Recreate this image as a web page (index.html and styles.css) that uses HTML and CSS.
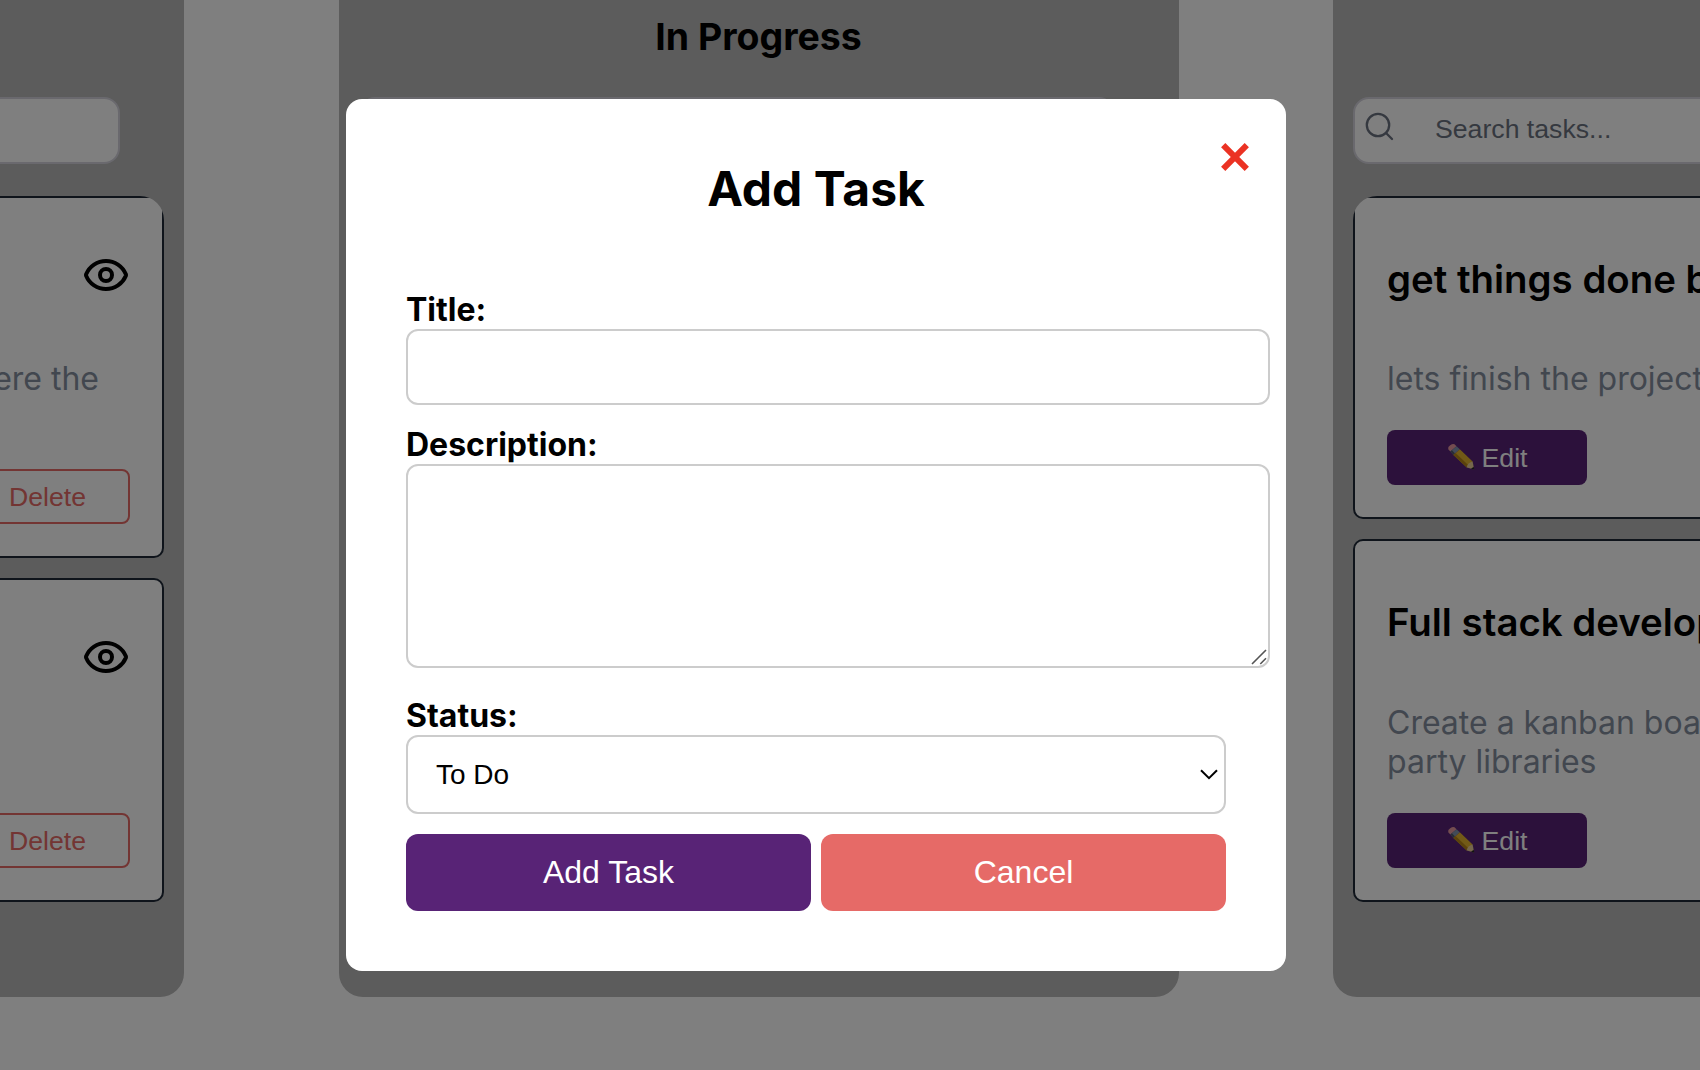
FILE: index.html
```
<!DOCTYPE html>
<html lang="en">
<head>
<meta charset="utf-8">
<title>Kanban Board</title>
<link rel="stylesheet" href="styles.css">
</head>
<body>
<svg class="defs" aria-hidden="true">
  <symbol id="eye" viewBox="0 0 24 24">
    <g fill="none" stroke="#000" stroke-width="2" stroke-linecap="round" stroke-linejoin="round">
      <path d="M2.062 12.348a1 1 0 0 1 0-.696 10.75 10.75 0 0 1 19.876 0 1 1 0 0 1 0 .696 10.75 10.75 0 0 1-19.876 0"/>
      <circle cx="12" cy="12" r="3"/>
    </g>
  </symbol>
  <symbol id="pencil" viewBox="0 0 28 28">
    <path d="M1.200 6.200 Q0.600 3.800 3.200 2.200 Q5.800 .3 7.500 1.200 L9.500 3.200 L3.400 8.600Z" fill="#e89aa0"/>
    <path d="M3.400 8.600 L9.500 3.200 L12.800 6.300 L6.400 12Z" fill="#8497b0"/>
    <path d="M3.400 8.600 L5 7.200 L8 10.600 L6.400 12Z" fill="#50586a"/>
    <path d="M6.400 12 L12.800 6.300 L25.600 18.400 L19.800 24.600Z" fill="#e5b52e"/>
    <path d="M6.400 12 L8.600 10 L21.700 22.600 L19.800 24.600Z" fill="#b78518"/>
    <path d="M19.800 24.600 Q20 20 25.600 18.400 L27.200 26.600Z" fill="#edcf98"/>
    <path d="M24 25.700 L26.700 23.700 L27.300 26.800Z" fill="#262626"/>
  </symbol>
  <symbol id="trash" viewBox="0 0 28 28">
    <path d="M2 2 H26 V5 H2Z M4 6 H24 L22 27 H6Z" fill="#a9adb3"/>
  </symbol>
</svg>

<main class="board">
  <section class="column">
    <h2 class="column-title"></h2>
    <div class="search"></div>
    <div class="tasks">
      <article class="card">
        <header class="card-head"><svg class="eye"><use href="#eye"/></svg></header>
        <p class="card-text two-lines align-end">here the</p>
        <div class="actions end"><button class="btn delete"><svg class="trash"><use href="#trash"/></svg>Delete</button></div>
      </article>
      <article class="card">
        <header class="card-head"><svg class="eye"><use href="#eye"/></svg></header>
        <p class="card-text"></p>
        <div class="actions end"><button class="btn delete"><svg class="trash"><use href="#trash"/></svg>Delete</button></div>
      </article>
    </div>
  </section>

  <section class="column">
    <h2 class="column-title">In Progress</h2>
    <div class="search"></div>
  </section>

  <section class="column">
    <h2 class="column-title"></h2>
    <div class="search">
      <svg class="search-icon" viewBox="0 0 32 32"><circle cx="14" cy="14" r="11.200"/><path d="M22 22 L28 28"/></svg>
      <span>Search tasks...</span>
    </div>
    <div class="tasks">
      <article class="card">
        <header class="card-head"><h3>get things done by</h3></header>
        <p class="card-text">lets finish the project</p>
        <div class="actions"><button class="btn edit"><svg class="pencil"><use href="#pencil"/></svg>Edit</button></div>
      </article>
      <article class="card">
        <header class="card-head"><h3>Full stack developer</h3></header>
        <p class="card-text">Create a kanban board<br>party libraries</p>
        <div class="actions"><button class="btn edit"><svg class="pencil"><use href="#pencil"/></svg>Edit</button></div>
      </article>
    </div>
  </section>
</main>

<div class="overlay">
  <div class="modal">
    <svg class="close" viewBox="0 0 28 28"><path d="M2.200 2.200 L25.800 25.800 M25.800 2.200 L2.200 25.800"/></svg>
    <h2 class="modal-title">Add Task</h2>
    <form class="form">
      <label>Title:</label>
      <div class="field input"></div>
      <label>Description:</label>
      <div class="field textarea">
        <svg class="grip" viewBox="0 0 16 16"><path d="M1 15 L15 1 M9.300 15 L15 9.300"/></svg>
      </div>
      <label>Status:</label>
      <div class="field select">
        <span>To Do</span>
        <svg class="chevron" viewBox="0 0 18 11"><path d="M1 1.200 L9 9.200 L17 1.200"/></svg>
      </div>
      <div class="form-actions">
        <button type="button" class="submit">Add Task</button>
        <button type="button" class="cancel">Cancel</button>
      </div>
    </form>
  </div>
</div>
</body>
</html>
```
FILE: styles.css
```
* { box-sizing: border-box; margin: 0; }

body {
  width: 1700px;
  height: 1070px;
  overflow: hidden;
  background: #fff;
  font-family: Inter, sans-serif;
  color: #000;
}

.defs { display: none; }

button { border: 0; padding: 0; font-family: "Liberation Sans", Arial, sans-serif; }

.board {
  display: flex;
  gap: 154.500px;
  width: 2829px;
  margin-left: -656px;
}

.column {
  width: 840px;
  height: 997px;
  padding: 14px 20px 0;
  background: #b8b8b8;
  border-radius: 0 0 24px 24px;
}

.column-title {
  height: 45px;
  font-size: 37.440px;
  line-height: 45px;
  font-weight: 700;
  text-align: center;
}

.search {
  display: flex;
  align-items: center;
  width: 756px;
  height: 67px;
  margin: 38px 0 32px;
  padding-left: 9px;
  background: #fff;
  border: 2px solid #d4d3dc;
  border-radius: 16px;
  font: 26.667px "Liberation Sans", Arial, sans-serif;
  color: #6b7280;
}

.search span { padding-bottom: 2px; }

.search-icon {
  width: 32px;
  height: 32px;
  margin: 0 39px 8px 0;
  fill: none;
  stroke: #6b7280;
  stroke-width: 2.300;
  stroke-linecap: round;
}

.tasks {
  display: flex;
  flex-direction: column;
  gap: 20px;
  border-radius: 24px 24px 0 0;
  overflow: hidden;
}

.card {
  padding: 32px;
  background: #fff;
  border: 2px solid #1f2937;
  border-radius: 10px;
}

.card-head {
  display: flex;
  height: 129px;
  padding-top: 27px;
  overflow: hidden;
}

.card + .card .card-head { height: 130px; }

.card-head h3 {
  font-size: 38.400px;
  line-height: 45px;
  font-weight: 600;
  white-space: nowrap;
}

.eye { width: 48px; height: 48px; margin: -6px 0 0 auto; }

.card-text {
  min-height: 39px;
  font-size: 32px;
  line-height: 39px;
  color: #858f9f;
  white-space: nowrap;
}

.two-lines { min-height: 78px; }
.align-end { padding-right: 31px; text-align: right; }

.actions { display: flex; margin-top: 32px; }
.end { justify-content: flex-end; }

.btn {
  display: flex;
  align-items: center;
  justify-content: center;
  width: 200px;
  height: 55px;
  padding-top: 1px;
  border-radius: 8px;
  font-size: 26.667px;
}

.edit { gap: 7px; background: #582376; color: #fff; }
.delete { gap: 7px; background: #fff; border: 2px solid #e66a67; color: #e66a67; }
.pencil, .trash { width: 28px; height: 28px; margin-bottom: 2px; }

.overlay {
  position: fixed;
  inset: 0;
  padding: 99px 0 0 346px;
  background: rgba(0, 0, 0, 0.5);
}

.modal {
  position: relative;
  width: 940px;
  height: 872px;
  padding: 61px 60px 60px;
  background: #fff;
  border-radius: 16px;
}

.close {
  position: absolute;
  top: 44px;
  right: 36.700px;
  width: 28px;
  height: 28px;
  fill: none;
  stroke: #eb3223;
  stroke-width: 6;
}

.modal-title {
  height: 58px;
  font-size: 48px;
  line-height: 58px;
  font-weight: 700;
  text-align: center;
}

.form { display: flex; flex-direction: column; padding-top: 72px; }

label { font-size: 32px; line-height: 39px; font-weight: 700; }

.field { background: #fff; border: 2px solid #ccc; border-radius: 12px; }
.input { width: 864px; height: 76px; margin-bottom: 20px; }

.textarea {
  display: flex;
  align-items: flex-end;
  justify-content: flex-end;
  width: 864px;
  height: 204px;
  margin-bottom: 28px;
  padding: 1px;
}

.grip { width: 16px; height: 16px; fill: none; stroke: #555; stroke-width: 1.600; }

.select {
  display: flex;
  align-items: center;
  justify-content: space-between;
  height: 79px;
  padding: 0 6px 0 28px;
  font: 28px "Liberation Sans", Arial, sans-serif;
}

.chevron { width: 18px; height: 11px; fill: none; stroke: #000; stroke-width: 2; }

.form-actions { display: flex; gap: 10px; margin-top: 20px; }
.form-actions button { flex: 1; height: 77px; border-radius: 12px; font-size: 32px; color: #fff; }
.form-actions .submit { background: #582376; }
.form-actions .cancel { background: #e66a67; }
```
